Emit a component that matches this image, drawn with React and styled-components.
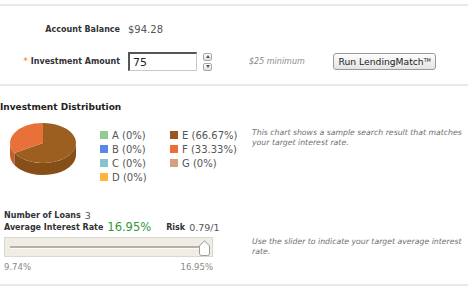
import React from "react";
import styled, { createGlobalStyle } from "styled-components";

const Global = createGlobalStyle`
  html, body { margin: 0; padding: 0; background: #fff; }
  body { font-family: "DejaVu Sans", Verdana, sans-serif; color: #333; }
`;

const Page = styled.div`
  width: 468px;
  padding-top: 4px;
`;

const Rule = styled.div`
  height: 2px;
  background: #e9e9e9;
`;

const TopSection = styled.section`
  height: 78px;
  box-sizing: border-box;
  padding-top: 14px;
  display: flex;
  flex-direction: column;
  gap: 14px;
`;

const FormRow = styled.div`
  display: grid;
  grid-template-columns: 120px auto;
  column-gap: 8px;
  align-items: center;
  height: ${(p) => p.$h}px;
`;

const Label = styled.div`
  text-align: right;
  font-size: 8px;
  font-weight: bold;
  color: #333;
  white-space: nowrap;
`;

const Star = styled.span`
  color: #f0a048;
  margin-right: 3px;
`;

const Value = styled.div`
  font-size: 10px;
  color: #555;
`;

const Controls = styled.div`
  display: flex;
  align-items: center;
`;

const AmountInput = styled.input`
  width: 69px;
  height: 19px;
  box-sizing: border-box;
  border-style: solid;
  border-width: 2px 1px 1px 2px;
  border-color: #555 #c8c8c8 #c8c8c8 #555;
  padding: 0 3px;
  margin: 0;
  font-family: "DejaVu Sans", Verdana, sans-serif;
  font-size: 11px;
  color: #222;
  outline: none;
`;

const Spinner = styled.div`
  display: flex;
  flex-direction: column;
  gap: 2px;
  margin-left: 6px;
`;

const SpinBtn = styled.div`
  width: 9px;
  height: 8px;
  box-sizing: border-box;
  border: 1px solid #a8a8a8;
  border-radius: 2px;
  background: linear-gradient(#ffffff, #e0e0e0);
  display: flex;
  align-items: center;
  justify-content: center;
  &::after {
    content: "";
    width: 0;
    height: 0;
    border-left: 2.5px solid transparent;
    border-right: 2.5px solid transparent;
    ${(p) =>
      p.$up
        ? "border-bottom: 3px solid #555;"
        : "border-top: 3px solid #555;"}
  }
`;

const Hint = styled.div`
  width: 84px;
  margin-left: 37px;
  font-size: 8px;
  font-style: italic;
  color: #8a8a8a;
  white-space: nowrap;
`;

const RunButton = styled.button`
  width: 103px;
  height: 17px;
  box-sizing: border-box;
  padding: 0;
  border: 1px solid #9a9a9a;
  border-radius: 3px;
  background: linear-gradient(#fdfdfd, #e4e4e4);
  font-family: "DejaVu Sans", Verdana, sans-serif;
  font-size: 9.2px;
  color: #222;
  white-space: nowrap;
  sup {
    font-size: 5px;
    vertical-align: 3px;
    letter-spacing: -0.3px;
  }
`;

const DistSection = styled.section`
  padding-top: 15px;
`;

const Heading = styled.h2`
  margin: 0 0 9px;
  height: 12px;
  line-height: 12px;
  font-size: 9px;
  font-weight: bold;
  color: #222;
`;

const DistBody = styled.div`
  display: flex;
  height: 62px;
`;

const LeftCol = styled.div`
  width: 252px;
  flex: none;
  display: flex;
  box-sizing: border-box;
  padding-left: ${(p) => p.$pl || 0}px;
  flex-direction: ${(p) => p.$dir || "row"};
`;

const Pie = styled.svg`
  margin-left: 9px;
  display: block;
`;

const Legend = styled.div`
  margin-left: 21px;
  margin-top: 6px;
  display: grid;
  grid-template-rows: repeat(4, 14px);
  grid-template-columns: 70px auto;
  grid-auto-flow: column;
`;

const LegendItem = styled.div`
  display: flex;
  align-items: center;
  gap: 4px;
  font-size: 10px;
  color: #555;
  white-space: nowrap;
  &::before {
    content: "";
    width: 8px;
    height: 8px;
    background: ${(p) => p.$color};
  }
`;

const Note = styled.p`
  margin: ${(p) => p.$mt}px 0 0;
  width: 218px;
  flex: none;
  font-size: 7.75px;
  line-height: 10px;
  font-style: italic;
  color: #6f6f6f;
`;

const LoansSection = styled.section`
  display: flex;
  padding-top: 25px;
  padding-bottom: 11px;
`;

const StatLine = styled.div`
  height: 12px;
  display: flex;
  align-items: center;
  white-space: nowrap;
`;

const StatLabel = styled.span`
  font-size: 8px;
  font-weight: bold;
  color: #333;
  margin-left: ${(p) => p.$ml || 0}px;
`;

const StatValue = styled.span`
  font-size: 9.5px;
  color: #555;
  margin-left: 4px;
`;

const Rate = styled.span`
  font-size: 11.5px;
  color: #2f9a35;
  margin-left: 4px;
`;

const SliderBox = styled.div`
  position: relative;
  width: 209px;
  height: 20px;
  box-sizing: border-box;
  margin-top: 4px;
  border: 1px solid #dcd8cc;
  background: #f0ede5;
  display: flex;
  align-items: center;
  padding: 0 7px 0 5px;
`;

const Track = styled.div`
  flex: 1;
  height: 2px;
  background: #b6b2a7;
  border-bottom: 1px solid #fbfaf6;
`;

const Handle = styled.svg`
  position: absolute;
  top: 2px;
  display: block;
`;

const Scale = styled.div`
  width: 209px;
  height: 12px;
  margin-top: 4px;
  display: flex;
  justify-content: space-between;
  align-items: center;
  font-size: 8.5px;
  color: #888;
`;

const legend = [
  ["A (0%)", "#93c993"],
  ["B (0%)", "#5b86e5"],
  ["C (0%)", "#88c3cd"],
  ["D (0%)", "#fbb63a"],
  ["E (66.67%)", "#98581b"],
  ["F (33.33%)", "#ec6d3a"],
  ["G (0%)", "#d79f7e"],
];

export default function App() {
  const min = 9.74;
  const max = 16.95;
  const value = 16.95;
  const pct = (value - min) / (max - min);
  const handleLeft = 5 + pct * 195 - 7;

  return (
    <Page>
      <Global />
      <Rule />
      <TopSection>
        <FormRow $h={18}>
          <Label>Account Balance</Label>
          <Value>$94.28</Value>
        </FormRow>
        <FormRow $h={19}>
          <Label>
            <Star>*</Star>Investment Amount
          </Label>
          <Controls>
            <AmountInput defaultValue="75" />
            <Spinner>
              <SpinBtn $up />
              <SpinBtn />
            </Spinner>
            <Hint>$25 minimum</Hint>
            <RunButton>
              Run LendingMatch<sup>TM</sup>
            </RunButton>
          </Controls>
        </FormRow>
      </TopSection>
      <Rule />
      <DistSection>
        <Heading>Investment Distribution</Heading>
        <DistBody>
          <LeftCol>
            <Pie width="70" height="56" viewBox="0 0 70 56">
              <path d="M1,21 A33,20 0 0 0 5.42,31 L5.42,43 A33,20 0 0 1 1,33 Z" fill="#c95f30" />
              <path d="M5.42,31 A33,20 0 0 0 67,21 L67,33 A33,20 0 0 1 5.42,43 Z" fill="#874f18" />
              <path d="M34,21 L5.42,31 A33,20 0 1 0 34,1 Z" fill="#9c5f1f" />
              <path d="M34,21 L34,1 A33,20 0 0 0 5.42,31 Z" fill="#e8713a" />
            </Pie>
            <Legend>
              {legend.map(([t, c]) => (
                <LegendItem key={t} $color={c}>
                  {t}
                </LegendItem>
              ))}
            </Legend>
          </LeftCol>
          <Note $mt={6}>
            This chart shows a sample search result that matches your target
            interest rate.
          </Note>
        </DistBody>
      </DistSection>
      <LoansSection>
        <LeftCol $pl={4} $dir="column">
          <StatLine>
            <StatLabel>Number of Loans</StatLabel>
            <StatValue>3</StatValue>
          </StatLine>
          <StatLine>
            <StatLabel>Average Interest Rate</StatLabel>
            <Rate>16.95%</Rate>
            <StatLabel $ml={15}>Risk</StatLabel>
            <StatValue>0.79/1</StatValue>
          </StatLine>
          <SliderBox>
            <Track />
            <Handle
              width="13"
              height="16"
              viewBox="0 0 13 16"
              style={{ left: `${handleLeft}px` }}
            >
              <path
                d="M1.5,6 L6,1.2 Q6.5,0.7 7,1.2 L11.5,6 L11.5,13.5 Q11.5,15.5 9.5,15.5 L3.5,15.5 Q1.5,15.5 1.5,13.5 Z"
                fill="#fff"
                stroke="#9a9a9a"
              />
            </Handle>
          </SliderBox>
          <Scale>
            <span>9.74%</span>
            <span>16.95%</span>
          </Scale>
        </LeftCol>
        <Note $mt={28}>
          Use the slider to indicate your target average interest rate.
        </Note>
      </LoansSection>
      <Rule />
    </Page>
  );
}
